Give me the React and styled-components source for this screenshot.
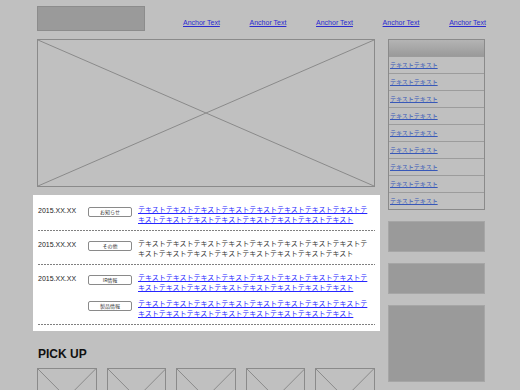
import React from 'react'
import styled, { createGlobalStyle } from 'styled-components'

const GlobalStyle = createGlobalStyle`
	html, body {
		margin: 0;
		padding: 0;
		background: #c0c0c0;
		font-family: "Liberation Sans", Arial, "Noto Sans CJK JP", sans-serif;
	}
`

const navItems = ['Anchor Text', 'Anchor Text', 'Anchor Text', 'Anchor Text', 'Anchor Text']
const sideItems = Array(9).fill('テキストテキスト')
const longText = 'テキスト'.repeat(16)

const news = [
	{ date: '2015.XX.XX', entries: [{ tag: 'お知らせ', link: true }] },
	{ date: '2015.XX.XX', entries: [{ tag: 'その他', link: false }] },
	{ date: '2015.XX.XX', entries: [{ tag: 'IR情報', link: true }, { tag: '製品情報', link: true }] },
]

function Cross() {
	return (
		<CrossSvg viewBox="0 0 100 100" preserveAspectRatio="none">
			<line x1="0" y1="0" x2="100" y2="100" vectorEffect="non-scaling-stroke" />
			<line x1="100" y1="0" x2="0" y2="100" vectorEffect="non-scaling-stroke" />
		</CrossSvg>
	)
}

function App() {
	return (
		<Page>
			<GlobalStyle />
			<Header>
				<Logo />
				<Nav>
					{navItems.map((t, i) => <NavLink key={i} href="#">{t}</NavLink>)}
				</Nav>
			</Header>

			<Body>
				<Main>
					<Hero><Cross /></Hero>

					<NewsPanel>
						{news.map((row, i) => (
							<NewsRow key={i}>
								{row.entries.map((e, j) => (
									<Entry key={j}>
										<DateText>{j === 0 ? row.date : ''}</DateText>
										<Tag>{e.tag}</Tag>
										<NewsText $link={e.link}>{longText}</NewsText>
									</Entry>
								))}
							</NewsRow>
						))}
					</NewsPanel>

					<PickTitle>PICK UP</PickTitle>
					<PickGrid>
						{[0, 1, 2, 3, 4].map(i => <PickBox key={i}><Cross /></PickBox>)}
					</PickGrid>
				</Main>

				<Side>
					<Menu>
						<MenuHead />
						{sideItems.map((t, i) => (
							<MenuItem key={i}><a href="#">{t}</a></MenuItem>
						))}
					</Menu>
					<Banner $h={31} />
					<Banner $h={31} />
					<Banner $h={77} />
				</Side>
			</Body>
		</Page>
	)
}

const Page = styled.div`
	padding: 6px 0 0 37px;
	width: 449px;
`

const Header = styled.header`
	display: flex;
	align-items: flex-end;
	height: 25px;
`

const Logo = styled.div`
	width: 106px;
	height: 23px;
	background: #9a9a9a;
	border: 1px solid #8c8c8c;
`

const Nav = styled.nav`
	margin-left: auto;
	width: 303px;
	display: flex;
	justify-content: space-between;
	padding-bottom: 4px;
`

const NavLink = styled.a`
	font-size: 7px;
	line-height: 8px;
	color: #2a2ad0;
	text-decoration: underline;
`

const Body = styled.div`
	display: flex;
	gap: 13px;
	margin-top: 8px;
`

const Main = styled.div`
	width: 338px;
	flex-shrink: 0;
`

const CrossSvg = styled.svg`
	display: block;
	width: 100%;
	height: 100%;

	line {
		stroke: #8a8a8a;
		stroke-width: 1;
	}
`

const Hero = styled.div`
	box-sizing: border-box;
	height: 148px;
	border: 1px solid #8a8a8a;
`

const NewsPanel = styled.div`
	margin: 8px -5px 0 -4px;
	padding: 2px 5px 6px 5px;
	background: #fff;
`

const NewsRow = styled.div`
	display: flex;
	flex-direction: column;
	gap: 7px;
	padding: 8px 0 7px;
	background-image: repeating-linear-gradient(to right, #808080 0 2px, transparent 2px 3px);
	background-size: 100% 1px;
	background-position: left bottom;
	background-repeat: no-repeat;
`

const Entry = styled.div`
	display: flex;
	align-items: flex-start;
`

const DateText = styled.div`
	width: 50px;
	flex-shrink: 0;
	font-size: 7px;
	line-height: 9px;
	margin-top: 1px;
	color: #222;
`

const Tag = styled.div`
	box-sizing: border-box;
	width: 44px;
	height: 10px;
	flex-shrink: 0;
	margin: 2px 6px 0 0;
	border: 1px solid #8a8a8a;
	border-radius: 2px;
	background: #fff;
	font-family: "Noto Sans CJK JP", sans-serif;
	font-size: 5px;
	line-height: 8px;
	text-align: center;
	color: #333;
`

const NewsText = styled.a`
	flex: 1;
	margin-right: 4px;
	font-family: "Noto Sans CJK JP", sans-serif;
	font-size: 7px;
	line-height: 9.5px;
	word-break: break-all;
	color: ${p => (p.$link ? '#2626ff' : '#333')};
	text-decoration: ${p => (p.$link ? 'underline' : 'none')};
`

const PickTitle = styled.h2`
	margin: 16px 0 7px 1px;
	font-size: 12px;
	line-height: 14px;
	font-weight: bold;
	color: #111;
`

const PickGrid = styled.div`
	display: grid;
	grid-template-columns: repeat(5, 1fr);
	gap: 10px;
`

const PickBox = styled.div`
	box-sizing: border-box;
	height: 60px;
	border: 1px solid #8a8a8a;
`

const Side = styled.aside`
	width: 97px;
	display: flex;
	flex-direction: column;
	gap: 11px;
`

const Menu = styled.div`
	border: 1px solid #8a8a8a;
`

const MenuHead = styled.div`
	height: 16px;
	background: linear-gradient(#b4b4b4, #9a9a9a);
`

const MenuItem = styled.div`
	height: 16px;
	border-top: 1px solid #9c9c9c;
	padding-left: 1px;
	font-family: "Noto Sans CJK JP", sans-serif;
	font-size: 6px;
	line-height: 16px;

	a {
		color: #3858b8;
		text-decoration: underline;
	}
`

const Banner = styled.div`
	height: ${p => p.$h}px;
	box-sizing: border-box;
	background: #9a9a9a;
	border: 1px solid #a6a6a6;
`

export default App
